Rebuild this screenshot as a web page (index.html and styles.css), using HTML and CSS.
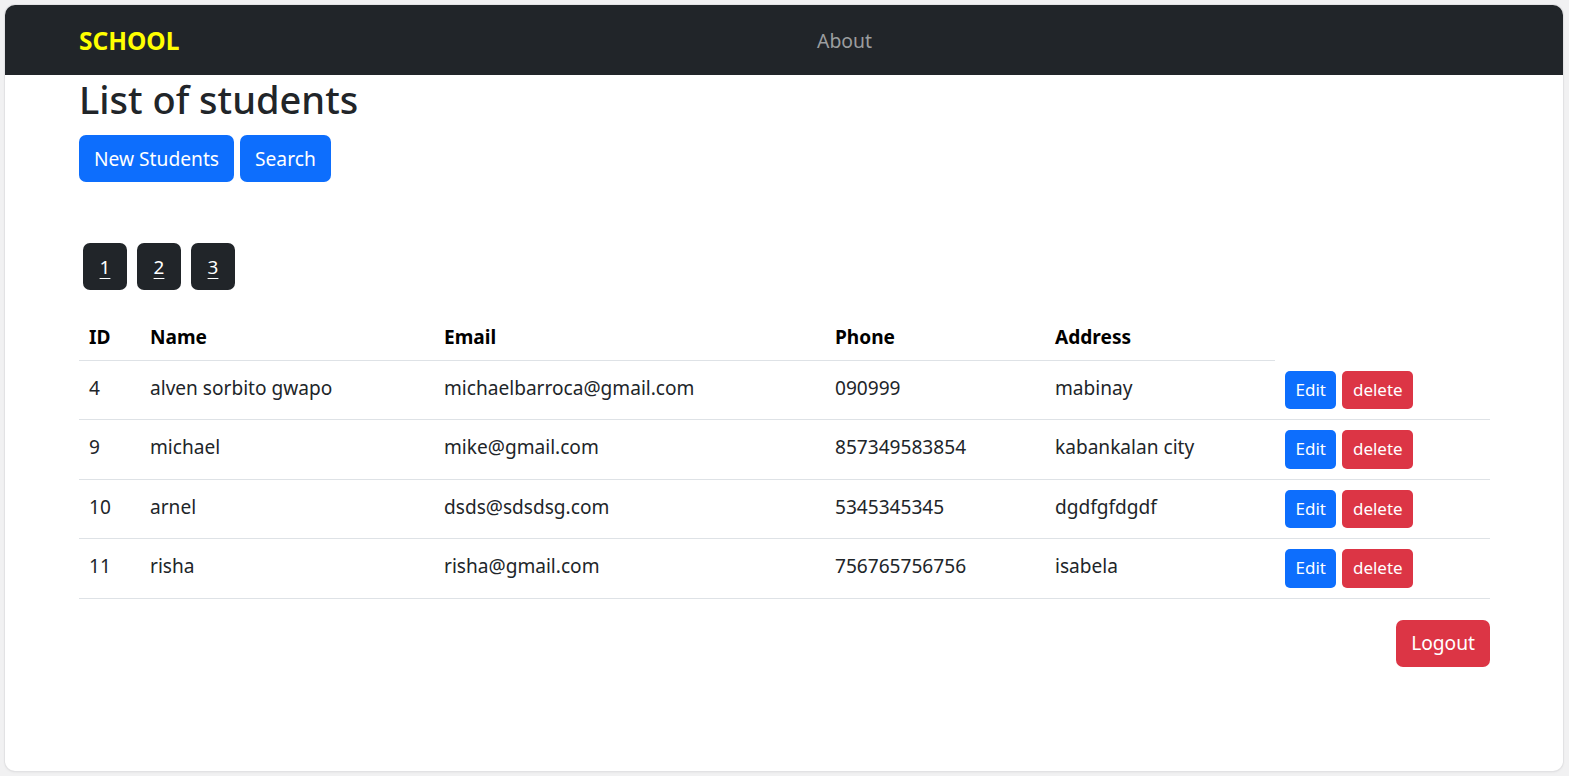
FILE: index.html
```html
<!DOCTYPE html>
<html lang="en">
<head>
<meta charset="utf-8">
<title>School - List of students</title>
<link rel="stylesheet" href="styles.css">
</head>
<body>
<div class="window">
  <nav class="navbar">
    <a class="brand" href="#">SCHOOL</a>
    <a class="nav-link" href="#">About</a>
  </nav>
  <main class="container">
    <h1 class="title">List of students</h1>
    <div class="actions">
      <a class="btn btn-primary" href="#">New Students</a>
      <a class="btn btn-primary" href="#">Search</a>
    </div>
    <div class="pager">
      <a class="page-btn" href="#">1</a>
      <a class="page-btn" href="#">2</a>
      <a class="page-btn" href="#">3</a>
    </div>
    <table class="table">
      <colgroup>
        <col class="c-id"><col class="c-name"><col class="c-email"><col class="c-phone"><col class="c-addr"><col class="c-act">
      </colgroup>
      <thead>
        <tr><th>ID</th><th>Name</th><th>Email</th><th>Phone</th><th>Address</th></tr>
      </thead>
      <tbody>
        <tr><td>4</td><td>alven sorbito gwapo</td><td>michaelbarroca@gmail.com</td><td>090999</td><td>mabinay</td>
          <td class="act"><div class="row-actions"><a class="btn-sm btn-primary" href="#">Edit</a><a class="btn-sm btn-danger" href="#">delete</a></div></td></tr>
        <tr><td>9</td><td>michael</td><td>mike@gmail.com</td><td>857349583854</td><td>kabankalan city</td>
          <td class="act"><div class="row-actions"><a class="btn-sm btn-primary" href="#">Edit</a><a class="btn-sm btn-danger" href="#">delete</a></div></td></tr>
        <tr><td>10</td><td>arnel</td><td>dsds@sdsdsg.com</td><td>5345345345</td><td>dgdfgfdgdf</td>
          <td class="act"><div class="row-actions"><a class="btn-sm btn-primary" href="#">Edit</a><a class="btn-sm btn-danger" href="#">delete</a></div></td></tr>
        <tr><td>11</td><td>risha</td><td>risha@gmail.com</td><td>756765756756</td><td>isabela</td>
          <td class="act"><div class="row-actions"><a class="btn-sm btn-primary" href="#">Edit</a><a class="btn-sm btn-danger" href="#">delete</a></div></td></tr>
      </tbody>
    </table>
    <div class="footer">
      <a class="btn btn-danger" href="#">Logout</a>
    </div>
  </main>
</div>
</body>
</html>
```

FILE: styles.css
```css
* { box-sizing: border-box; }

html, body {
  margin: 0;
  height: 776px;
  overflow: hidden;
}

body {
  background: #f1f1f2;
  padding: 5px 6px 5px 5px;
  font-family: "Noto Sans", "Open Sans", "Liberation Sans", sans-serif;
  color: #212529;
}

a { text-decoration: none; }

.window {
  width: 1558px;
  height: 766px;
  background: #fff;
  border-radius: 10px;
  overflow: hidden;
  box-shadow: 0 0 0 1px #e2e2e4, 0 1px 3px rgba(0,0,0,0.08);
}

.navbar {
  height: 70px;
  background: #212529;
  display: flex;
  align-items: center;
  padding-left: 74px;
}

.brand {
  width: 738px;
  color: #ffff00;
  font-weight: 700;
  font-size: 24.5px;
  line-height: 30px;
  padding-top: 2px;
}

.nav-link {
  color: #9b9d9f;
  font-size: 19.4px;
  line-height: 30px;
  padding-top: 2px;
}

.container {
  padding: 0 73px 0 74px;
}

.title {
  margin: 0 0 12px;
  font-size: 38px;
  line-height: 48px;
  font-weight: 500;
  color: #212529;
}

.actions {
  display: flex;
  gap: 6px;
}

.btn {
  display: inline-flex;
  align-items: center;
  justify-content: center;
  height: 47px;
  padding: 0 15px 1px;
  border-radius: 7px;
  font-size: 19.2px;
  color: #fff;
}

.btn-primary { background: #0d6efd; }
.btn-danger { background: #dc3545; }

.pager {
  display: flex;
  gap: 10px;
  margin: 61px 0 0 4px;
}

.page-btn {
  width: 44px;
  height: 47px;
  display: inline-flex;
  align-items: center;
  justify-content: center;
  background: #212529;
  border-radius: 7px;
  color: #fff;
  font-size: 18.9px;
  text-decoration: underline;
  text-underline-offset: 4px;
}

.table {
  margin-top: 20px;
  width: 1411px;
  border-collapse: collapse;
  table-layout: fixed;
}

.c-id { width: 61px; }
.c-name { width: 294px; }
.c-email { width: 391px; }
.c-phone { width: 220px; }
.c-addr { width: 230px; }
.c-act { width: 215px; }

.table th,
.table td {
  padding: 12px 10px 8px;
  text-align: left;
  vertical-align: top;
  font-size: 19.1px;
  line-height: 30px;
  border-bottom: 1px solid #dee2e6;
}

.table td.act {
  padding: 10px;
}

.table th {
  font-weight: 700;
  color: #000;
}

.table td {
  color: #212529;
}

.row-actions {
  display: flex;
  gap: 6px;
}

.btn-sm {
  display: inline-flex;
  align-items: center;
  justify-content: center;
  height: 38.5px;
  padding: 0 10.5px 1px;
  border-radius: 5px;
  font-size: 17px;
  line-height: 1;
  color: #fff;
}

.footer {
  display: flex;
  justify-content: flex-end;
  margin-top: 21px;
}
```
